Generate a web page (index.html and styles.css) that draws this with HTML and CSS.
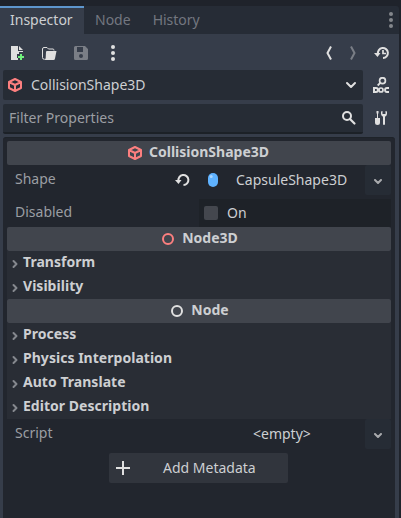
FILE: index.html
```html
<!DOCTYPE html>
<html lang="en">
<head>
<meta charset="utf-8">
<title>Inspector</title>
<link rel="stylesheet" href="styles.css">
</head>
<body>
<svg class="defs" width="0" height="0">
  <symbol id="cube" viewBox="0 0 16 16"><path d="M8 2 14 5v6L8 14 2 11V5zM2 5 8 8l6-3M8 8v6" fill="none" stroke="currentColor" stroke-width="2" stroke-linejoin="round"/></symbol>
  <symbol id="dots" viewBox="0 0 16 16"><circle cx="8" cy="2" r="2"/><circle cx="8" cy="8" r="2"/><circle cx="8" cy="14" r="2"/></symbol>
  <symbol id="down" viewBox="0 0 16 16"><path d="m4 6 4 4 4-4" fill="none" stroke="currentColor" stroke-width="2" stroke-linecap="round" stroke-linejoin="round"/></symbol>
  <symbol id="small-down" viewBox="0 0 16 16"><path d="m5 7 3 3 3-3" fill="none" stroke="currentColor" stroke-width="2" stroke-linecap="round" stroke-linejoin="round"/></symbol>
  <symbol id="fold" viewBox="0 0 12 12"><path d="m4.500 3 3 3-3 3" fill="none" stroke="currentColor" stroke-width="2" stroke-linecap="round" stroke-linejoin="round"/></symbol>
  <symbol id="ring" viewBox="0 0 16 16"><circle cx="8" cy="8" r="5" fill="none" stroke="currentColor" stroke-width="2"/></symbol>
</svg>
<div class="dock">
  <nav class="tabs">
    <div class="tab active">Inspector</div>
    <div class="tab">Node</div>
    <div class="tab">History</div>
    <svg class="icon tab-menu"><use href="#dots"/></svg>
  </nav>
  <main class="panel">
    <div class="toolbar">
      <svg class="icon" viewBox="0 0 16 16"><path d="M2 1v14h7v-2H8V9h2V7h4V6H9V1zm8 0v4h4z"/><path d="M11 8h2v2h2v2h-2v2h-2v-2H9v-2h2z" transform="translate(0 1)" fill="#70f07c"/></svg>
      <svg class="icon" viewBox="0 0 16 16"><path d="M3.500 14.200Q1.500 14.500 1.500 12.500V4q0-1.500 1.500-1.500H6L7.500 4H12q1 0 1 1.500" fill="none" stroke="currentColor"/><path d="M6 6h9.500L14 13.500q-.2 1.500-1.500 1.500H3q1.500-.5 1.700-2L5 7q0-1 1-1z"/></svg>
      <svg class="icon disabled" viewBox="0 0 16 16"><path fill-rule="evenodd" d="M2.500 1Q1 1 1 2.500v11Q1 15 2.500 15h11q1.500 0 1.500-1.500V4l-3-3zM4 2h6v5H4zm4 7a2 2 0 0 1 0 4 2 2 0 0 1 0-4z"/></svg>
      <svg class="icon" viewBox="0 0 16 16"><use href="#dots"/></svg>
      <span class="spacer"></span>
      <svg class="arrow" viewBox="0 0 8 16"><path d="M6 1.500 2.500 8 6 14.500" fill="none" stroke="currentColor" stroke-width="2"/></svg>
      <svg class="arrow disabled" viewBox="0 0 8 16"><path d="M2 1.500 5.500 8 2 14.500" fill="none" stroke="currentColor" stroke-width="2"/></svg>
      <svg class="icon" viewBox="0 0 16 16"><path d="M4 9A5 5 0 1 1 9 13" fill="none" stroke="currentColor" stroke-width="2"/><path d="M0 8h6.500l-3 4z"/><path d="M9 5v3.500h3" fill="none" stroke="currentColor" stroke-width="1.700"/></svg>
    </div>
    <div class="row">
      <div class="field selector">
        <svg class="icon red"><use href="#cube"/></svg><span>CollisionShape3D</span>
        <svg class="icon end"><use href="#down"/></svg>
      </div>
      <svg class="icon side" viewBox="0 0 16 16"><circle cx="9.500" cy="3.700" r="2.900" fill="none" stroke="currentColor" stroke-width="1.700"/><path d="M7.500 5.700 4.700 8.500" stroke="currentColor" stroke-width="1.800"/><path fill-rule="evenodd" d="M0 10h3q3 0 3 3t-3 3H0zm2 2v2h1q1 0 1-1t-1-1z"/><circle cx="8" cy="13" r="2" fill="none" stroke="currentColor" stroke-width="1.700"/><path d="M16 11h-2q-2 0-2 2t2 2h2" fill="none" stroke="currentColor" stroke-width="1.800"/></svg>
    </div>
    <div class="row">
      <div class="field filter">
        <span>Filter Properties</span>
        <svg class="icon end" viewBox="0 0 16 16"><circle cx="6" cy="6" r="4" fill="none" stroke="currentColor" stroke-width="2"/><path d="m9 9 4.500 4.500" stroke="currentColor" stroke-width="2.200" stroke-linecap="round"/></svg>
      </div>
      <svg class="icon side tools" viewBox="0 0 16 16"><path d="M3.500 1h2v2L5 4v4h2v4.500Q7 15 4.500 15T2 12.500V8h2V4l-.5-1z"/><path d="M8 1.500V4q0 1.700 2 2.700V14q0 1 1 1t1-1V6.700q2-1 2-2.700V1.500L12.500 1v3h-3V1z"/></svg>
    </div>
    <section class="inspector">
      <h2 class="category wide"><svg class="icon red"><use href="#cube"/></svg>CollisionShape3D</h2>
      <div class="property shape">
        <label>Shape</label>
        <svg class="icon revert" viewBox="0 0 16 16"><path d="M3.500 9A5 5 0 1 1 8.500 13" fill="none" stroke="currentColor" stroke-width="2"/><path d="M0 8h6.500l-3 4z"/></svg>
        <div class="resource"><svg class="icon" viewBox="0 0 16 16"><rect x="3" y="1" width="10" height="14" rx="5" fill="#5fb2ff"/><circle cx="6.200" cy="4.500" r="1.500" fill="#a9d5ff"/></svg><span>CapsuleShape3D</span></div>
        <div class="drop"><svg class="icon"><use href="#small-down"/></svg></div>
      </div>
      <div class="property toggle">
        <label>Disabled</label>
        <div class="check"><i></i><span>On</span></div>
      </div>
      <h2 class="category"><svg class="icon red"><use href="#ring"/></svg>Node3D</h2>
      <div class="group"><svg><use href="#fold"/></svg>Transform</div>
      <div class="group"><svg><use href="#fold"/></svg>Visibility</div>
      <h2 class="category"><svg class="icon"><use href="#ring"/></svg>Node</h2>
      <div class="group"><svg><use href="#fold"/></svg>Process</div>
      <div class="group"><svg><use href="#fold"/></svg>Physics Interpolation</div>
      <div class="group"><svg><use href="#fold"/></svg>Auto Translate</div>
      <div class="group"><svg><use href="#fold"/></svg>Editor Description</div>
      <div class="property script">
        <label>Script</label>
        <span class="empty">&lt;empty&gt;</span>
        <div class="drop"><svg class="icon"><use href="#small-down"/></svg></div>
      </div>
      <button class="add"><svg class="icon" viewBox="0 0 16 16"><path d="M8 1v14M1 8h14" stroke="currentColor" stroke-width="2"/></svg><span>Add Metadata</span></button>
    </section>
  </main>
</div>
</body>
</html>
```

FILE: styles.css
```css
* { box-sizing: border-box; }
body {
  margin: 0;
  height: 518px;
  overflow: hidden;
  background: #1f232b;
  color: #cdcfd2;
  font: 14px/20px "Noto Sans", sans-serif;
}
.defs { display: none; }
svg { display: block; flex: none; fill: currentColor; }
.icon { width: 16px; height: 16px; color: #e0e0e0; }
.red { color: #fc7f7f; }
.disabled { opacity: .4; }
.spacer { flex: 1; }
.dock { width: 399px; height: 518px; padding-top: 6px; display: flex; flex-direction: column; }
.tabs { display: flex; height: 28px; background: #262c36; border-radius: 0 3px 0 0; }
.tab { padding: 4px 11px 0; color: #737780; }
.tab.active {
  width: 84px;
  padding: 2px 0 0 10px;
  background: #363d4a;
  border-top: 2px solid #5e96cd;
  color: #cdcfd2;
}
.tab-menu { margin: 6px 0 0 auto; opacity: .5; }
.panel { flex: 1; min-height: 0; display: flex; flex-direction: column; background: #363d4a; }
.toolbar { display: flex; align-items: center; height: 36px; padding: 2px 9px 0 9px; gap: 16px; }
.arrow { width: 8px; height: 16px; color: #e0e0e0; }
.toolbar .icon:last-child { margin-left: 1px; }
.row { display: flex; align-items: center; height: 30px; padding-left: 3px; margin-bottom: 4px; }
.row + .row { margin-bottom: 3px; }
.field { display: flex; align-items: center; width: 360px; height: 30px; background: #262c35; border-radius: 2px; }
.selector { padding: 0 4px; }
.selector span { margin-left: 8px; }
.filter { padding: 0 6px; border-bottom: 2px solid #1c2127; color: #9b9ea3; }
.end { margin-left: auto; }
.side { margin-left: 10px; }
.tools { margin-bottom: 2px; }
.inspector {
  flex: 1;
  width: 392px;
  margin-left: 3px;
  padding: 3px 4px 0;
  background: #22262e;
  border-top: 1px solid #1e2329;
  border-radius: 3px 3px 0 0;
}
.category {
  display: flex;
  align-items: center;
  justify-content: center;
  gap: 6px;
  height: 24px;
  margin: 0;
  padding-bottom: 2px;
  background: #41454d;
  border-radius: 2px;
  font-size: 14px;
}
.category .icon { position: relative; top: 1px; }
.category.wide { padding-right: 2px; }
.property { display: flex; height: 30px; }
.property label { width: 159px; padding: 4px 0 0 8px; color: #9b9ea3; }
.shape { margin-bottom: 4px; }
.revert { margin: 7px 0 0 9px; }
.resource { display: flex; flex: 1; padding-left: 14px; }
.resource .icon { margin-top: 7px; }
.resource span { margin: 5px 0 0 15px; }
.drop { width: 26px; height: 30px; margin-left: auto; padding: 8px 5px; background: #262c35; border-radius: 2px; }
.drop .icon { opacity: .7; }
.toggle { height: 28px; }
.toggle label { width: 192px; padding-top: 3px; }
.check { display: flex; flex: 1; gap: 9px; padding: 4px 5px; background: #1e2228; }
.check i { width: 14px; height: 14px; margin-top: 3px; border-radius: 2px; background: #44474e; }
.group { display: flex; align-items: center; gap: 2px; height: 24px; padding: 0 0 2px 2px; background: #292d35; font-weight: 700; letter-spacing: .03px; }
.group svg { width: 12px; height: 12px; color: #85888e; position: relative; top: 2px; }
.script label { width: 246px; }
.empty { padding-top: 5px; }
.add {
  display: flex;
  align-items: center;
  width: 179px;
  height: 30px;
  margin: 4px 0 0 102px;
  padding: 0 6px;
  border: 0;
  border-radius: 2px;
  background: #31353d;
  color: inherit;
  font: inherit;
}
.add span { margin-left: 32px; }
```
